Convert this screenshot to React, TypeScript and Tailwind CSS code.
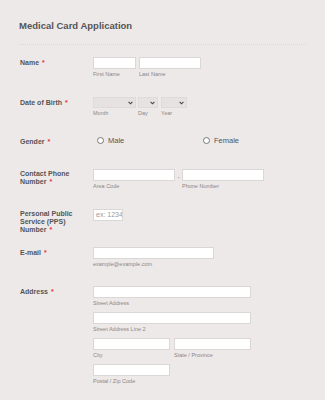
import React from 'react';

const Req = () => <span className="ml-[3px] text-[#e53935]">*</span>;

const Label: React.FC<{ children: React.ReactNode; className?: string }> = ({ children, className }) => (
  <div className={`w-[73px] shrink-0 pr-2 text-[7px] font-bold leading-[8px] text-[#555] ${className ?? ''}`}>{children}</div>
);

const Input: React.FC<{ w: string; placeholder?: string }> = ({ w, placeholder }) => (
  <div className={`${w} h-[12px] overflow-hidden whitespace-nowrap border border-[#dcd7d7] bg-white pl-[2px] text-[7px] leading-[10px] text-[#9a9a9a]`}>
    {placeholder}
  </div>
);

const Sub: React.FC<{ children: React.ReactNode }> = ({ children }) => (
  <div className="mt-[2px] whitespace-nowrap text-[5.5px] leading-[7px] text-[#8a8686]">{children}</div>
);

const Field: React.FC<{ w: string; sub: string }> = ({ w, sub }) => (
  <div>
    <Input w={w} />
    <Sub>{sub}</Sub>
  </div>
);

const Select: React.FC<{ w: string; sub: string }> = ({ w, sub }) => (
  <div>
    <div className={`${w} flex h-[11px] items-center justify-end border border-[#e0dbdb] bg-[#e7e2e2] pr-[2px]`}>
      <svg width="5" height="4" viewBox="0 0 5 4">
        <path d="M0.6 0.8 L2.5 2.8 L4.4 0.8" fill="none" stroke="#444" strokeWidth="1.1" />
      </svg>
    </div>
    <Sub>{sub}</Sub>
  </div>
);

const Radio: React.FC<{ label: string }> = ({ label }) => (
  <div className="flex items-center gap-[4px]">
    <span className="h-[7px] w-[7px] rounded-full border border-[#777] bg-white" />
    <span className="text-[7.5px] leading-[9px] text-[#555]">{label}</span>
  </div>
);

export default function App() {
  return (
    <div className="min-h-[400px] w-[325px] bg-[#eee9e9] pl-[19px] pr-[19px] pt-[20px]" style={{ fontFamily: '"Liberation Sans", Arial, sans-serif' }}>
      <h1 className="text-[9.5px] font-bold leading-[12px] text-[#555]">Medical Card Application</h1>
      <div className="mt-[12px] border-t border-dotted border-[#dcd7d7]" />

      <div className="mt-[12px] flex h-[40px] items-start pl-[1px]">
        <Label className="pt-[2px]">Name<Req /></Label>
        <div className="flex gap-[3px]">
          <Field w="w-[43px]" sub="First Name" />
          <Field w="w-[62px]" sub="Last Name" />
        </div>
      </div>

      <div className="flex h-[38px] items-start pl-[1px]">
        <Label className="pt-[2px]">Date of Birth<Req /></Label>
        <div className="flex gap-[2px]">
          <Select w="w-[43px]" sub="Month" />
          <Select w="w-[20px]" sub="Day" />
          <div className="ml-[1px]">
            <Select w="w-[26px]" sub="Year" />
          </div>
        </div>
      </div>

      <div className="flex h-[34px] items-start pl-[1px]">
        <Label className="pt-[3px]">Gender<Req /></Label>
        <div className="flex items-start pl-[4px] pt-[1px]">
          <div className="w-[106px]">
            <Radio label="Male" />
          </div>
          <Radio label="Female" />
        </div>
      </div>

      <div className="flex h-[40px] items-start pl-[1px]">
        <Label className="pt-[1px]">Contact Phone Number<Req /></Label>
        <div className="flex items-start">
          <Field w="w-[82px]" sub="Area Code" />
          <div className="w-[7px] pt-[5px] text-center text-[6px] leading-[7px] text-[#777]">-</div>
          <Field w="w-[82px]" sub="Phone Number" />
        </div>
      </div>

      <div className="flex h-[38px] items-start pl-[1px]">
        <Label className="pt-[1px]">Personal Public Service (PPS) Number<Req /></Label>
        <Input w="w-[30px]" placeholder="ex: 1234" />
      </div>

      <div className="flex h-[39px] items-start pl-[1px]">
        <Label className="pt-[2px]">E-mail<Req /></Label>
        <Field w="w-[121px]" sub="example@example.com" />
      </div>

      <div className="flex items-start pl-[1px]">
        <Label className="pt-[2px]">Address<Req /></Label>
        <div className="flex flex-col gap-[5px]">
          <Field w="w-[158px]" sub="Street Address" />
          <Field w="w-[158px]" sub="Street Address Line 2" />
          <div className="flex gap-[4px]">
            <Field w="w-[77px]" sub="City" />
            <Field w="w-[77px]" sub="State / Province" />
          </div>
          <Field w="w-[77px]" sub="Postal / Zip Code" />
        </div>
      </div>
    </div>
  );
}
